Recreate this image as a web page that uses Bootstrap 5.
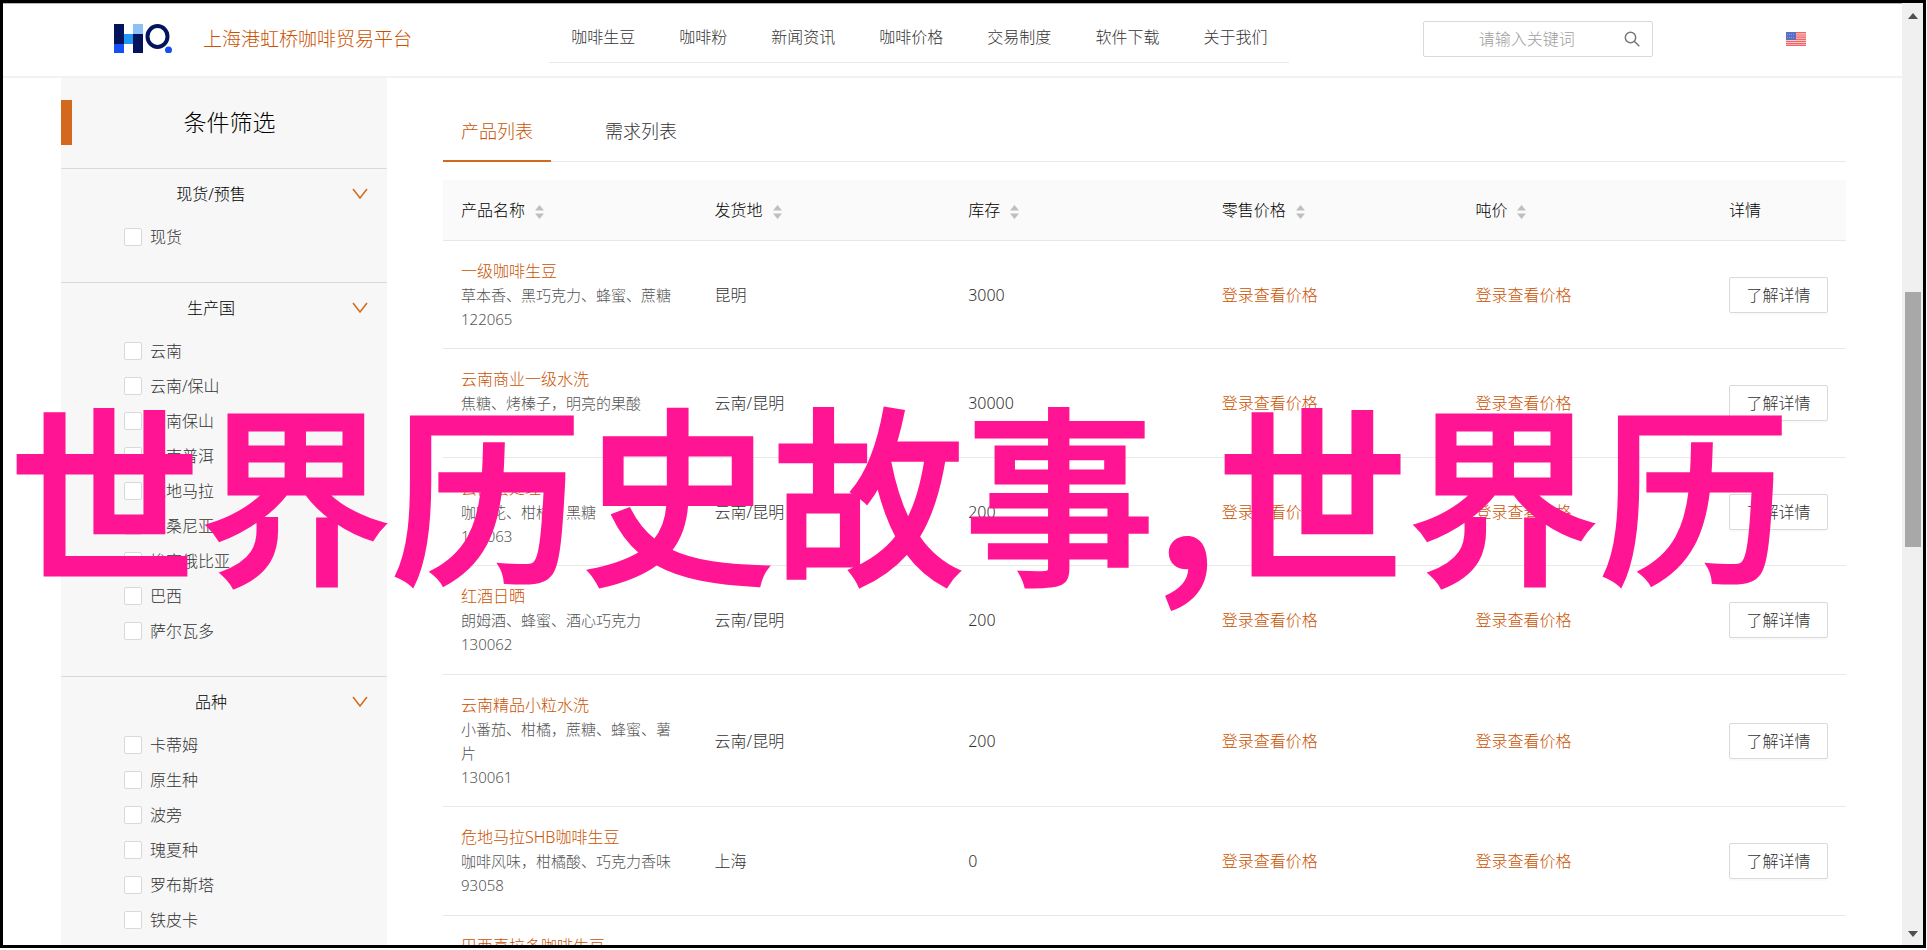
<!DOCTYPE html>
<html lang="zh-CN">
<head>
<meta charset="utf-8">
<meta name="viewport" content="width=device-width, initial-scale=1">
<title>上海港虹桥咖啡贸易平台</title>
<link href="https://cdn.jsdelivr.net/npm/bootstrap@5.3.0/dist/css/bootstrap.min.css" rel="stylesheet">
<style>
:root { --brand: #d2691e; --brand-text: #c95200; --line: #e8e8e8; --edge: #d9d9d9; --ink: #000; --text: #333; }
body { font: 300 16px/24px "Noto Sans", "Noto Sans CJK SC", sans-serif; color: var(--text); background: #fff; }
a { color: var(--brand-text); text-decoration: none; }
.frame { height: 100vh; padding: 0 1px 2px 0; }
.window { border: 3px solid #000; }
.viewport { border-top: 1px solid #b5b5b5; }

.topbar { height: 74px; padding: 0 96px 3px 111px; border-bottom: 2px solid #f0f2f5; }
.brand-name { font-size: 19px; color: var(--brand-text); }
.brand-link { gap: 31px; }
.main-menu { border-bottom: 1px solid var(--line); margin: 8px 0 0 4px; }
.main-menu .nav-link { padding: 0 22px; height: 40px; line-height: 30px; color: var(--text); }
.search { width: 230px; height: 36px; border: 1px solid var(--edge); border-radius: 2px; }
.search input { border: 0; outline: 0; background: none; min-width: 0; padding: 0 0 0 18px; text-align: center; font-weight: 300; }
.search input::placeholder { color: #a0a0a0; }
.search button { width: 40px; border: 0; background: none; padding: 0; line-height: 1; }

.page { padding: 0 56px 0 58px; gap: 56px; }
.filters { width: 326px; background: #f7f7f7; color: var(--text); }
.filters-head { height: 90px; padding-bottom: 2px; }
.filters-head::before { content: ""; width: 11px; height: 45px; background: var(--brand); }
.filters-head h1 { font-size: 23px; font-weight: 300; line-height: 34px; color: #000; }
.filter-group { border-top: 1px solid var(--edge); padding-bottom: 28px; }
.filter-title { height: 50px; padding: 0 19px 0 9px; border: 0; background: none; color: #000; font-weight: 300; }
.filter-item { height: 35px; padding-left: 63px; gap: 8px; }
.filter-item .form-check-input { width: 18px; height: 18px; margin: 0; border: 1px solid var(--edge); border-radius: 2px; }

.list-tabs { height: 84px; border-bottom: 1px solid var(--line); gap: 36px; margin-bottom: 18px; }
.list-tabs .nav-link { padding: 39px 18px 0; height: 84px; font-size: 18px; line-height: 28px; color: var(--text); border-bottom: 2px solid transparent; }
.list-tabs .nav-link.active { color: var(--brand-text); border-color: var(--brand); }

.goods { table-layout: fixed; width: 100%; }
.goods th { height: 60px; padding: 0 18px; background: #fafafa; color: var(--ink); font-weight: 300; border-bottom: 1px solid var(--line); }
.goods th svg { margin-left: 10px; }
.goods td { padding: 18px 18px 17px; border-bottom: 1px solid var(--line); vertical-align: middle; }
.goods tr:nth-child(even) td { padding-bottom: 18px; }
.goods .action { width: 135px; }
.note { font-size: 15px; color: #555; }
.btn-more { width: 99px; height: 36px; padding: 0; border: 1px solid var(--edge); border-radius: 2px; background: #fff; color: var(--text); font-weight: 300; box-shadow: 0 2px 0 rgba(0,0,0,.02); }

.scroller { width: 21px; background: #f0f0f0; padding: 10px 2px 8px 3px; }
.scroller .before { flex: 273 0 0; }
.scroller .thumb { flex: 254 0 0; background: #a8a8a8; }
.scroller .after { flex: 384 0 0; }

.banner { left: 9px; right: 0; top: 50%; margin-top: -128px; overflow: hidden; white-space: nowrap; font: 500 191px/280px "Noto Sans CJK SC", sans-serif; color: #ff1493; -webkit-text-stroke: 3px #ff1493; pointer-events: none; }
.banner span { font-weight: 700; -webkit-text-stroke: 0; }
</style>
</head>
<body>
<svg class="d-none" xmlns="http://www.w3.org/2000/svg">
  <symbol id="sort" viewBox="0 0 9 14"><path fill="#bfbfbf" d="M4.500 0 9 5.500H0zM0 8.500h9L4.500 14z"/></symbol>
  <symbol id="chevron" viewBox="0 0 16 12"><path fill="none" stroke="#d2691e" stroke-width="1.500" d="M1 1l7 9 7-9"/></symbol>
</svg>
<div class="frame position-relative overflow-hidden">
  <div class="window d-flex h-100 overflow-hidden">
    <div class="viewport flex-grow-1 overflow-hidden">
      <header class="topbar d-flex align-items-center justify-content-between">
        <a href="#" class="brand-link d-flex align-items-center">
          <svg width="58" height="29" viewBox="0 0 58 29" aria-label="HQ">
            <path fill="#04145c" d="M0 0h10v20H0zM19 10h10v19H19z"/>
            <path fill="#1450f5" d="M0 20h10v9H0z"/>
            <path fill="#8dc0f5" d="M19 0h10v10H19z"/>
            <path fill="#2196f3" d="M10 10h9v10h-9z"/>
            <ellipse cx="43.500" cy="12.500" rx="10" ry="10.500" fill="none" stroke="#04145c" stroke-width="4"/>
            <circle cx="54.500" cy="26" r="3.500" fill="#1450f5"/>
          </svg>
          <span class="brand-name">上海港虹桥咖啡贸易平台</span>
        </a>
        <nav class="main-menu nav flex-nowrap">
          <a class="nav-link" href="#">咖啡生豆</a>
          <a class="nav-link" href="#">咖啡粉</a>
          <a class="nav-link" href="#">新闻资讯</a>
          <a class="nav-link" href="#">咖啡价格</a>
          <a class="nav-link" href="#">交易制度</a>
          <a class="nav-link" href="#">软件下载</a>
          <a class="nav-link" href="#">关于我们</a>
        </nav>
        <form class="search d-flex">
          <input class="flex-grow-1" type="text" placeholder="请输入关键词" aria-label="请输入关键词">
          <button type="button" class="flex-shrink-0" aria-label="搜索"><svg width="16" height="16" viewBox="0 0 16 16"><g fill="none" stroke="#777" stroke-width="1.500"><circle cx="6.500" cy="6.500" r="5.200"/><path d="M10.300 10.300l5 5"/></g></svg></button>
        </form>
        <a href="#" class="d-flex" aria-label="English"><svg width="20" height="14" viewBox="0 0 20 14"><path fill="#f8c9c9" d="M0 0h20v14H0z"/><path stroke="#f26464" stroke-width="1.200" d="M0 .7h20M0 3h20M0 5.200h20M0 7.400h20M0 9.500h20M0 11.600h20M0 13.500h20"/><path fill="#5a6fc4" d="M0 0h10v8H0z"/><path stroke="#8a9ad8" stroke-dasharray="1 1" d="M1 2.500h8M1 5.500h8"/></svg></a>
      </header>
      <div class="page d-flex">
        <aside class="filters flex-shrink-0">
          <div class="filters-head d-flex align-items-center"><h1 class="flex-grow-1 text-center m-0">条件筛选</h1></div>
          <section class="filter-group">
            <button type="button" class="filter-title d-flex align-items-center w-100"><span class="flex-grow-1">现货/预售</span><svg width="16" height="12"><use href="#chevron"/></svg></button>
            <div class="filter-item d-flex align-items-center"><input class="form-check-input" type="checkbox" id="s1"><label for="s1">现货</label></div>
          </section>
          <section class="filter-group">
            <button type="button" class="filter-title d-flex align-items-center w-100"><span class="flex-grow-1">生产国</span><svg width="16" height="12"><use href="#chevron"/></svg></button>
            <div class="filter-item d-flex align-items-center"><input class="form-check-input" type="checkbox" id="c1"><label for="c1">云南</label></div>
            <div class="filter-item d-flex align-items-center"><input class="form-check-input" type="checkbox" id="c2"><label for="c2">云南/保山</label></div>
            <div class="filter-item d-flex align-items-center"><input class="form-check-input" type="checkbox" id="c3"><label for="c3">云南保山</label></div>
            <div class="filter-item d-flex align-items-center"><input class="form-check-input" type="checkbox" id="c4"><label for="c4">云南普洱</label></div>
            <div class="filter-item d-flex align-items-center"><input class="form-check-input" type="checkbox" id="c5"><label for="c5">危地马拉</label></div>
            <div class="filter-item d-flex align-items-center"><input class="form-check-input" type="checkbox" id="c6"><label for="c6">坦桑尼亚</label></div>
            <div class="filter-item d-flex align-items-center"><input class="form-check-input" type="checkbox" id="c7"><label for="c7">埃塞俄比亚</label></div>
            <div class="filter-item d-flex align-items-center"><input class="form-check-input" type="checkbox" id="c8"><label for="c8">巴西</label></div>
            <div class="filter-item d-flex align-items-center"><input class="form-check-input" type="checkbox" id="c9"><label for="c9">萨尔瓦多</label></div>
          </section>
          <section class="filter-group">
            <button type="button" class="filter-title d-flex align-items-center w-100"><span class="flex-grow-1">品种</span><svg width="16" height="12"><use href="#chevron"/></svg></button>
            <div class="filter-item d-flex align-items-center"><input class="form-check-input" type="checkbox" id="v1"><label for="v1">卡蒂姆</label></div>
            <div class="filter-item d-flex align-items-center"><input class="form-check-input" type="checkbox" id="v2"><label for="v2">原生种</label></div>
            <div class="filter-item d-flex align-items-center"><input class="form-check-input" type="checkbox" id="v3"><label for="v3">波旁</label></div>
            <div class="filter-item d-flex align-items-center"><input class="form-check-input" type="checkbox" id="v4"><label for="v4">瑰夏种</label></div>
            <div class="filter-item d-flex align-items-center"><input class="form-check-input" type="checkbox" id="v5"><label for="v5">罗布斯塔</label></div>
            <div class="filter-item d-flex align-items-center"><input class="form-check-input" type="checkbox" id="v6"><label for="v6">铁皮卡</label></div>
          </section>
        </aside>
        <main class="flex-grow-1">
          <nav class="list-tabs nav">
            <a class="nav-link active" href="#">产品列表</a>
            <a class="nav-link" href="#">需求列表</a>
          </nav>
          <table class="goods">
            <thead>
              <tr>
                <th>产品名称<svg width="9" height="14"><use href="#sort"/></svg></th>
                <th>发货地<svg width="9" height="14"><use href="#sort"/></svg></th>
                <th>库存<svg width="9" height="14"><use href="#sort"/></svg></th>
                <th>零售价格<svg width="9" height="14"><use href="#sort"/></svg></th>
                <th>吨价<svg width="9" height="14"><use href="#sort"/></svg></th>
                <th class="action">详情</th>
              </tr>
            </thead>
            <tbody>
              <tr><td><a href="#">一级咖啡生豆</a><div class="note">草本香、黑巧克力、蜂蜜、蔗糖</div><div class="note">122065</div></td><td>昆明</td><td>3000</td><td><a href="#">登录查看价格</a></td><td><a href="#">登录查看价格</a></td><td><button type="button" class="btn-more">了解详情</button></td></tr>
              <tr><td><a href="#">云南商业一级水洗</a><div class="note">焦糖、烤榛子，明亮的果酸</div><div class="note">130064</div></td><td>云南/昆明</td><td>30000</td><td><a href="#">登录查看价格</a></td><td><a href="#">登录查看价格</a></td><td><button type="button" class="btn-more">了解详情</button></td></tr>
              <tr><td><a href="#">云南蜜处理</a><div class="note">咖啡花、柑橘、黑糖</div><div class="note">130063</div></td><td>云南/昆明</td><td>200</td><td><a href="#">登录查看价格</a></td><td><a href="#">登录查看价格</a></td><td><button type="button" class="btn-more">了解详情</button></td></tr>
              <tr><td><a href="#">红酒日晒</a><div class="note">朗姆酒、蜂蜜、酒心巧克力</div><div class="note">130062</div></td><td>云南/昆明</td><td>200</td><td><a href="#">登录查看价格</a></td><td><a href="#">登录查看价格</a></td><td><button type="button" class="btn-more">了解详情</button></td></tr>
              <tr><td><a href="#">云南精品小粒水洗</a><div class="note">小番茄、柑橘，蔗糖、蜂蜜、薯片</div><div class="note">130061</div></td><td>云南/昆明</td><td>200</td><td><a href="#">登录查看价格</a></td><td><a href="#">登录查看价格</a></td><td><button type="button" class="btn-more">了解详情</button></td></tr>
              <tr><td><a href="#">危地马拉SHB咖啡生豆</a><div class="note">咖啡风味，柑橘酸、巧克力香味</div><div class="note">93058</div></td><td>上海</td><td>0</td><td><a href="#">登录查看价格</a></td><td><a href="#">登录查看价格</a></td><td><button type="button" class="btn-more">了解详情</button></td></tr>
              <tr><td><a href="#">巴西喜拉多咖啡生豆</a></td><td></td><td></td><td></td><td></td><td></td></tr>
            </tbody>
          </table>
        </main>
      </div>
    </div>
    <div class="scroller d-flex flex-column align-items-stretch flex-shrink-0">
      <svg class="align-self-center" width="10" height="6" viewBox="0 0 10 6"><path fill="#505050" d="M5 0l5 6H0z"/></svg>
      <div class="before"></div><div class="thumb"></div><div class="after"></div>
      <svg class="align-self-center" width="10" height="6" viewBox="0 0 10 6"><path fill="#505050" d="M0 0h10L5 6z"/></svg>
    </div>
  </div>
  <div class="banner position-absolute">世界历史故事<span>,</span>世界历</div>
</div>
<script src="https://cdn.jsdelivr.net/npm/bootstrap@5.3.0/dist/js/bootstrap.bundle.min.js"></script>
</body>
</html>
